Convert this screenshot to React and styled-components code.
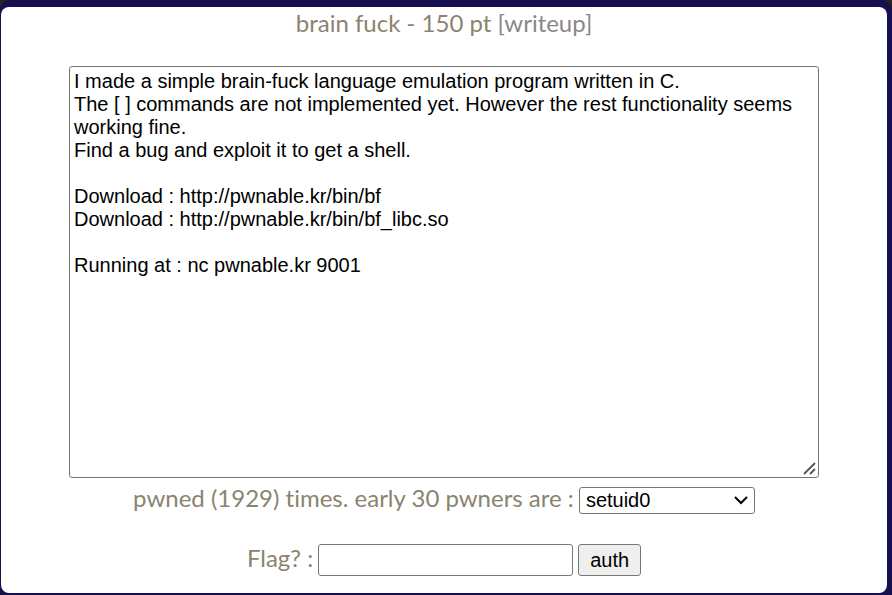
import React from "react";
import styled, { createGlobalStyle } from "styled-components";

const GlobalStyle = createGlobalStyle`
  *, *::before, *::after { box-sizing: border-box; }
  body {
    margin: 0;
    background: #2a2220;
    font-family: Lato, "Liberation Sans", sans-serif;
    font-variant-ligatures: none;
  }
`;

const Frame = styled.main`
  display: flex;
  min-height: 100vh;
  padding: 7px 5px 2px 1px;
  border-radius: 10px 10px 0 0;
  background: #171050;
`;

const Panel = styled.form`
  flex: 1;
  display: flex;
  flex-direction: column;
  align-items: center;
  padding: 1px 16px 16px;
  border-radius: 8px;
  background: #fff;
  color: #8a846f;
  font-size: 24px;
  line-height: 30px;
`;

const Title = styled.h1`
  margin: 0 0 28px;
  font-size: inherit;
  font-weight: 400;
`;

const WriteupLink = styled.a`
  color: #888888;
  text-decoration: none;
`;

const controlText = `
  border: 1px solid #767676;
  border-radius: 3px;
  color: #000;
  font-family: "Liberation Sans", Arial, sans-serif;
  font-size: 20px;
`;

const DescriptionBox = styled.div`
  position: relative;
  width: 88%;
  max-width: 750px;
`;

const Description = styled.textarea`
  ${controlText}
  display: block;
  width: 100%;
  height: 412px;
  padding: 3px 4px;
  background: #fff;
  line-height: 23px;
  resize: vertical;

  &::-webkit-resizer { background: transparent; }
`;

const ResizeGrip = styled.svg`
  position: absolute;
  right: 3px;
  bottom: 3px;
  pointer-events: none;
`;

const Row = styled.div`
  display: flex;
  align-items: baseline;
  gap: 5px;
  margin-top: ${({ $space }) => $space}px;
`;

const SelectBox = styled.span`
  position: relative;
  display: inline-flex;
`;

const OwnerSelect = styled.select`
  ${controlText}
  appearance: none;
  width: 176px;
  height: 27px;
  padding: 0 24px 0 6px;
  background: #fff;
`;

const Chevron = styled.svg`
  position: absolute;
  right: 7px;
  top: 9px;
  pointer-events: none;
`;

const FlagInput = styled.input`
  ${controlText}
  width: 255px;
  height: 32px;
  padding: 1px 4px;
  background: #fff;
`;

const AuthButton = styled.button`
  ${controlText}
  height: 32px;
  padding: 0 11px;
  background: #efefef;
`;

const description = `I made a simple brain-fuck language emulation program written in C.
The [ ] commands are not implemented yet. However the rest functionality seems working fine.
Find a bug and exploit it to get a shell.

Download : http://pwnable.kr/bin/bf
Download : http://pwnable.kr/bin/bf_libc.so

Running at : nc pwnable.kr 9001`;

export default function App() {
  return (
    <>
      <GlobalStyle />
      <Frame>
        <Panel onSubmit={(event) => event.preventDefault()}>
          <Title>
            brain fuck - 150 pt <WriteupLink href="#writeup">[writeup]</WriteupLink>
          </Title>
          <DescriptionBox>
            <Description
              aria-label="Challenge description"
              defaultValue={description}
              spellCheck={false}
            />
            <ResizeGrip width="13" height="13" viewBox="0 0 13 13" fill="none" stroke="#555" strokeWidth="1.8" aria-hidden="true">
              <path d="M1 12 12 1M7 12l5-5" />
            </ResizeGrip>
          </DescriptionBox>
          <Row $space={5}>
            <label htmlFor="owners">pwned (1929) times. early 30 pwners are :</label>
            <SelectBox>
              <OwnerSelect id="owners">
                <option>setuid0</option>
              </OwnerSelect>
              <Chevron width="14" height="9" viewBox="0 0 14 9" fill="none" stroke="#000" strokeWidth="2" aria-hidden="true">
                <path d="M1 1l6 6 6-6" />
              </Chevron>
            </SelectBox>
          </Row>
          <Row $space={29}>
            <label htmlFor="flag">Flag? :</label>
            <FlagInput id="flag" type="text" />
            <AuthButton type="submit">auth</AuthButton>
          </Row>
        </Panel>
      </Frame>
    </>
  );
}
